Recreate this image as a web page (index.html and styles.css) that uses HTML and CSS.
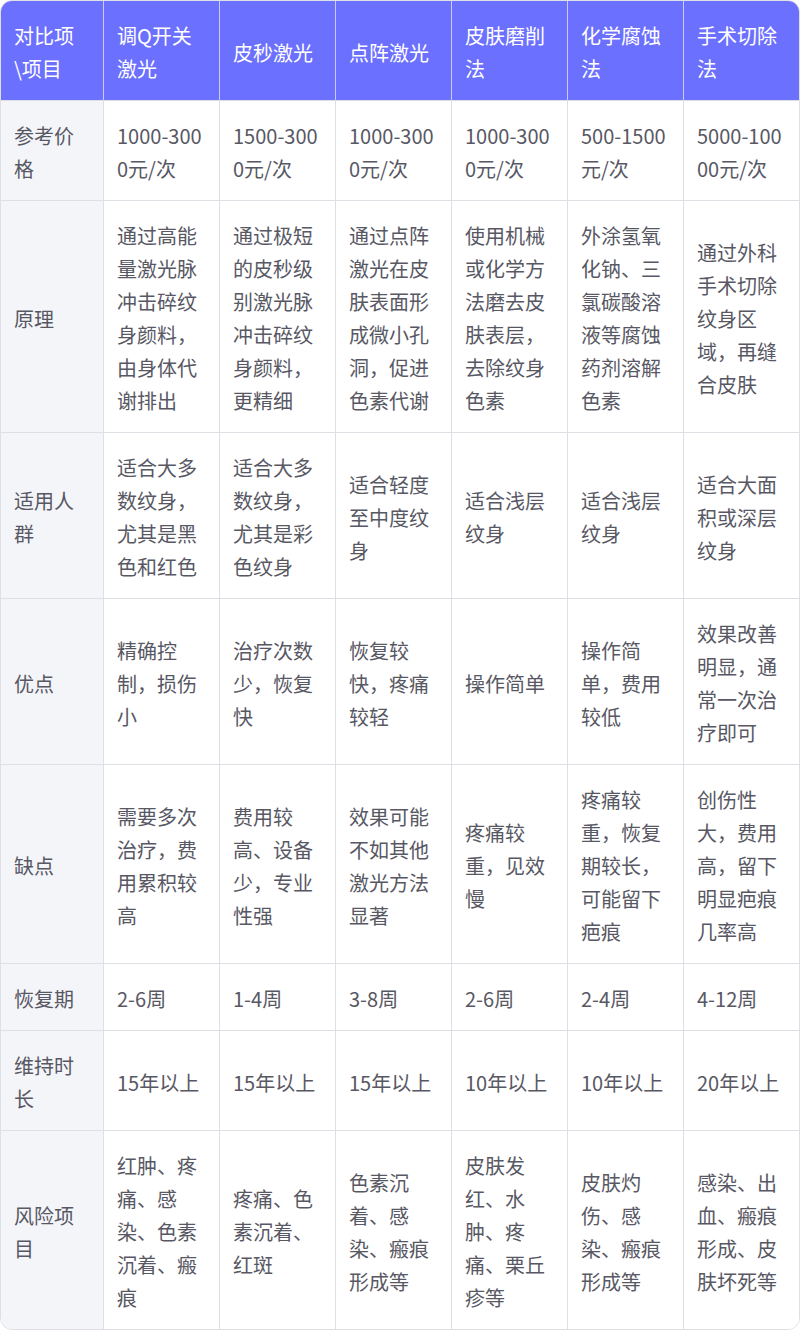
FILE: index.html
```html
<!DOCTYPE html>
<html lang="zh">
<head>
<meta charset="utf-8">
<title>纹身去除方法对比</title>
<link rel="stylesheet" href="styles.css">
</head>
<body>
<div class="wrap">
<table class="cmp">
<colgroup>
<col class="c-first"><col class="c"><col class="c"><col class="c"><col class="c"><col class="c"><col class="c-last">
</colgroup>
<thead>
<tr><th>对比项\项目</th><th>调Q开关激光</th><th>皮秒激光</th><th>点阵激光</th><th>皮肤磨削法</th><th>化学腐蚀法</th><th>手术切除法</th></tr>
</thead>
<tbody>
<tr><td class="lab">参考价格</td><td>1000-3000元/次</td><td>1500-3000元/次</td><td>1000-3000元/次</td><td>1000-3000元/次</td><td>500-1500元/次</td><td>5000-10000元/次</td></tr>
<tr><td class="lab">原理</td><td>通过高能量激光脉冲击碎纹身颜料，由身体代谢排出</td><td>通过极短的皮秒级别激光脉冲击碎纹身颜料，更精细</td><td>通过点阵激光在皮肤表面形成微小孔洞，促进色素代谢</td><td>使用机械或化学方法磨去皮肤表层，去除纹身色素</td><td>外涂氢氧化钠、三氯碳酸溶液等腐蚀药剂溶解色素</td><td>通过外科手术切除纹身区域，再缝合皮肤</td></tr>
<tr><td class="lab">适用人群</td><td>适合大多数纹身，尤其是黑色和红色</td><td>适合大多数纹身，尤其是彩色纹身</td><td>适合轻度至中度纹身</td><td>适合浅层纹身</td><td>适合浅层纹身</td><td>适合大面积或深层纹身</td></tr>
<tr><td class="lab">优点</td><td>精确控制，损伤小</td><td>治疗次数少，恢复快</td><td>恢复较快，疼痛较轻</td><td>操作简单</td><td>操作简单，费用较低</td><td>效果改善明显，通常一次治疗即可</td></tr>
<tr><td class="lab">缺点</td><td>需要多次治疗，费用累积较高</td><td>费用较高、设备少，专业性强</td><td>效果可能不如其他激光方法显著</td><td>疼痛较重，见效慢</td><td>疼痛较重，恢复期较长，可能留下疤痕</td><td>创伤性大，费用高，留下明显疤痕几率高</td></tr>
<tr><td class="lab">恢复期</td><td>2-6周</td><td>1-4周</td><td>3-8周</td><td>2-6周</td><td>2-4周</td><td>4-12周</td></tr>
<tr><td class="lab">维持时长</td><td>15年以上</td><td>15年以上</td><td>15年以上</td><td>10年以上</td><td>10年以上</td><td>20年以上</td></tr>
<tr><td class="lab">风险项目</td><td>红肿、疼痛、感染、色素沉着、瘢痕</td><td>疼痛、色素沉着、红斑</td><td>色素沉着、感染、瘢痕形成等</td><td>皮肤发红、水肿、疼痛、栗丘疹等</td><td>皮肤灼伤、感染、瘢痕形成等</td><td>感染、出血、瘢痕形成、皮肤坏死等</td></tr>
</tbody>
</table>
</div>
</body>
</html>
```

FILE: styles.css
```css
html, body {
  margin: 0;
  padding: 0;
  background: #ffffff;
}

body {
  font-family: "Noto Sans CJK SC", "Noto Sans", sans-serif;
  width: 800px;
}

.wrap {
  width: 800px;
  box-sizing: border-box;
  border: 1px solid #dedfe5;
  border-radius: 12px;
  overflow: hidden;
}

.cmp {
  width: 798px;
  table-layout: fixed;
  border-collapse: separate;
  border-spacing: 0;
  font-size: 20px;
  line-height: 33px;
}

.c-first { width: 103px; }
.c { width: 116px; }
.c-last { width: 115px; }

.cmp th,
.cmp td {
  padding: 18px 13px 15px;
  text-align: left;
  vertical-align: middle;
  word-break: break-all;
  border-right: 1px solid #dedfe5;
  border-bottom: 1px solid #dedfe5;
  font-weight: 400;
}

.cmp th:last-child,
.cmp td:last-child {
  border-right: none;
}

.cmp tbody tr:last-child td {
  border-bottom: none;
}

.cmp th {
  background: #6c70fe;
  color: #ffffff;
  border-right-color: #c9cbf5;
  border-bottom-color: #dedfe5;
}

.cmp td {
  color: #585864;
  background: #ffffff;
}

.cmp td.lab {
  background: #f4f5f9;
}
```
